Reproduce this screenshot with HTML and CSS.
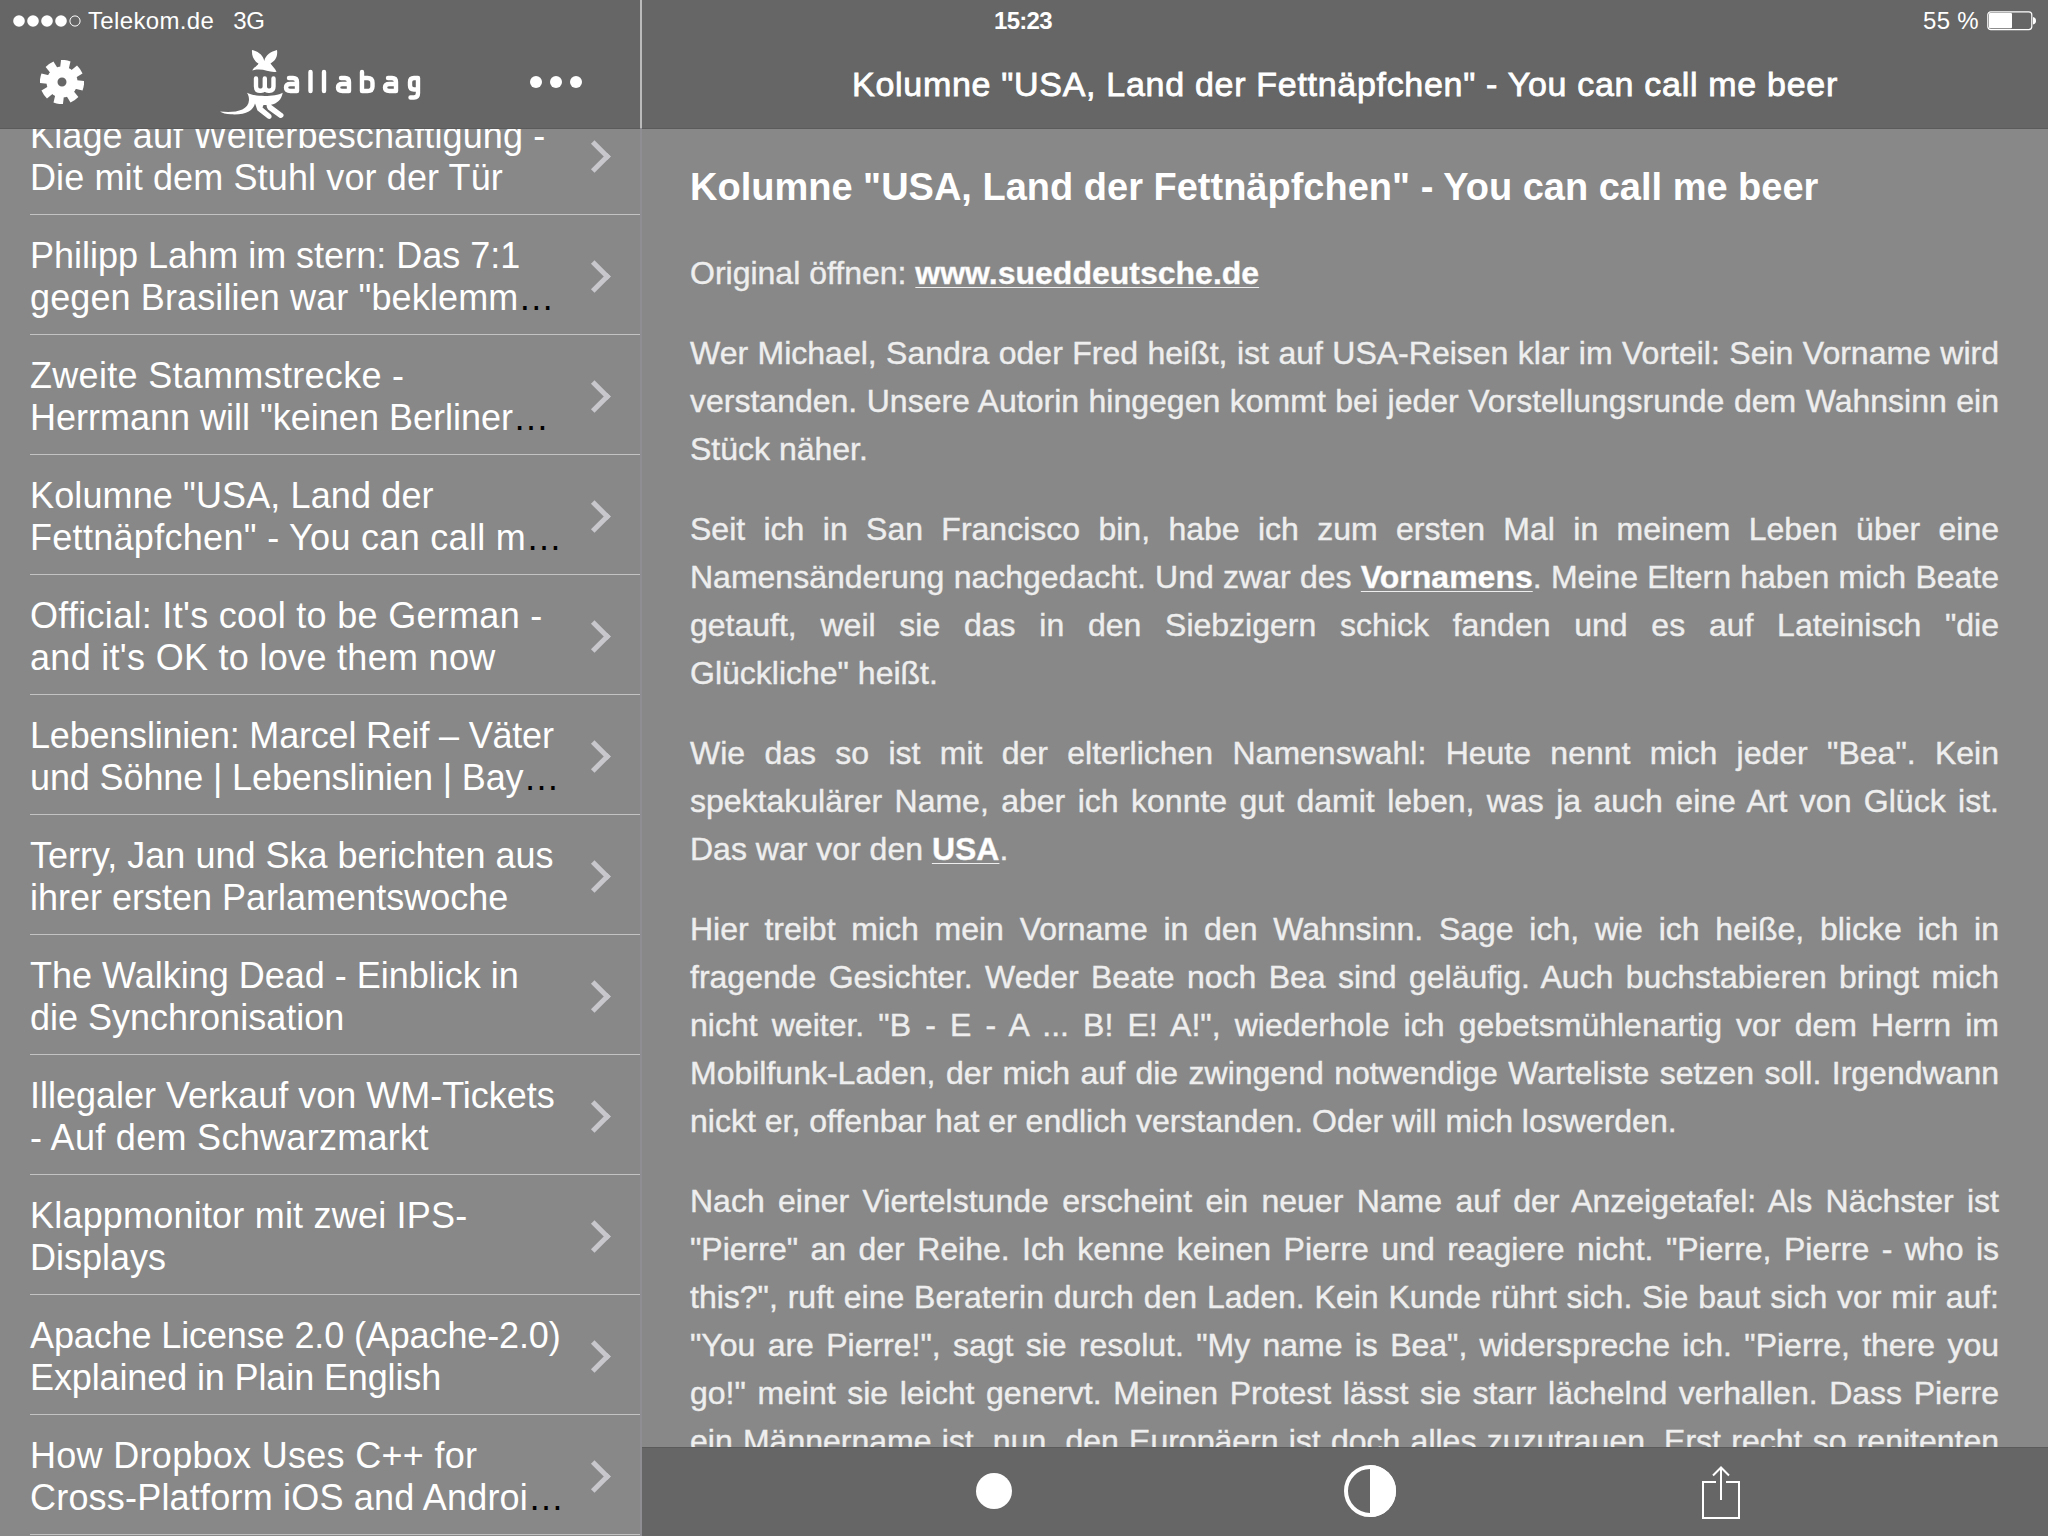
FILE: index.html
```html
<!DOCTYPE html>
<html lang="de">
<head>
<meta charset="utf-8">
<title>wallabag</title>
<link rel="stylesheet" href="styles.css">
</head>
<body>
<div class="app">
  <aside class="sidebar">
    <header class="bar">
      <div class="status status-left">
        <svg class="signal" width="68" height="12" viewBox="0 0 68 12" fill="#fff"><circle cx="6" cy="6" r="5.8"/><circle cx="20" cy="6" r="5.8"/><circle cx="34" cy="6" r="5.8"/><circle cx="48" cy="6" r="5.8"/><circle cx="62" cy="6" r="5.1" fill="none" stroke="#fff" stroke-width="1"/></svg>
        <span class="carrier">Telekom.de</span>
        <span class="network">3G</span>
      </div>
      <div class="tools">
        <svg class="gear" width="44" height="44" viewBox="-22 -22 44 44">
          <defs><path id="tooth" d="M-4.200 -12 L-4.800 -21.700 Q0 -22.600 4.800 -21.700 L4.200 -12 Z" fill="#fff"/></defs>
          <use href="#tooth" transform="rotate(10)"/><use href="#tooth" transform="rotate(55)"/><use href="#tooth" transform="rotate(100)"/><use href="#tooth" transform="rotate(145)"/><use href="#tooth" transform="rotate(190)"/><use href="#tooth" transform="rotate(235)"/><use href="#tooth" transform="rotate(280)"/><use href="#tooth" transform="rotate(325)"/>
          <circle r="10" fill="none" stroke="#fff" stroke-width="11"/>
        </svg>
        <svg class="logo" width="204" height="72" viewBox="0 0 204 72" fill="none" stroke="#fff" stroke-width="4.4" stroke-linecap="round" stroke-linejoin="round">
          <g fill="#fff" stroke="none">
            <path d="M32 0C38 1.500 43 5 44.300 11C45.500 5 51 1.500 57 0C58 7 55 11 50.500 13.500C52 16 55 18 56.500 21.700C49 23 43 17.500 32.300 20.500C34 17 37.500 16 38.500 13.500C34 11 31.500 6 32 0Z"/>
            <path d="M27 42.700C34 47 55 47 62.700 42.700C61.500 50 57 53.500 51 54.800L63 63.800C65 66 62 69 59.500 67.700L48 59.500C47 58 46.500 56.500 46.500 55H43.500L42.500 57.500L50.800 64.500C53 67 50.500 70 47.800 68.600L37.500 60.500C36.500 58 36 56 35 53.500C33 61 26 65 11 64.300C6 64 2 63.200 0 61.500C13 63 28.500 61.500 29 50C29 47 28.500 45 27 42.700Z"/>
          </g>
          <path d="M36 28.500V36.500Q36 40.800 40 40.800H41Q44.800 40.800 44.800 36.500V28.500V36.500Q44.800 40.800 48.500 40.800H49.500Q53.500 40.800 53.500 36.500V28.500" stroke-width="4.400"/>
          <path d="M69 28H73Q77 28 77 32V41H70.500Q66 41 66 37.500T70.500 34H77"/>
          <path d="M90.500 22V41M104 22V41"/>
          <path d="M121 28H125Q129 28 129 32V41H122.500Q118 41 118 37.500T122.500 34H129"/>
          <path d="M142 22V41H147.500Q152.500 41 152.500 36.500V33Q152.500 28 147.500 28H142"/>
          <path d="M168 28H172Q176 28 176 32V41H169.500Q165 41 165 37.500T169.500 34H176"/>
          <path d="M198 39.500H194Q190 39.500 190 35.500V32Q190 28 194 28H198V43Q198 47.500 194 47.500H190.500"/>
        </svg>
        <svg class="more" width="52" height="12" viewBox="0 0 52 12" fill="#fff"><circle cx="6" cy="6" r="6"/><circle cx="26" cy="6" r="6"/><circle cx="46" cy="6" r="6"/></svg>
      </div>
    </header>
    <ul class="list">
      <li><p><span class="loose-1">Klage auf Weiterbeschäftigung -</span><span class="loose-1">Die mit dem Stuhl vor der Tür</span></p></li>
      <li><p><span>Philipp Lahm im stern: Das 7:1</span><span class="loose-1">gegen Brasilien war "beklemm<i>…</i></span></p></li>
      <li><p><span class="loose-3">Zweite Stammstrecke -</span><span>Herrmann will "keinen Berliner<i>…</i></span></p></li>
      <li><p><span class="loose-1">Kolumne "USA, Land der</span><span class="loose-3">Fettnäpfchen" - You can call m<i>…</i></span></p></li>
      <li><p><span class="loose-3">Official: It's cool to be German -</span><span class="loose-3">and it's OK to love them now</span></p></li>
      <li><p><span class="tight-2">Lebenslinien: Marcel Reif – Väter</span><span class="tight-1">und Söhne | Lebenslinien | Bay<i>…</i></span></p></li>
      <li><p><span>Terry, Jan und Ska berichten aus</span><span>ihrer ersten Parlamentswoche</span></p></li>
      <li><p><span>The Walking Dead - Einblick in</span><span>die Synchronisation</span></p></li>
      <li><p><span>Illegaler Verkauf von WM-Tickets</span><span class="loose-3">- Auf dem Schwarzmarkt</span></p></li>
      <li><p><span class="loose-2">Klappmonitor mit zwei IPS-</span><span>Displays</span></p></li>
      <li><p><span class="tight-1">Apache License 2.0 (Apache-2.0)</span><span class="tight-1">Explained in Plain English</span></p></li>
      <li><p><span class="loose-3">How Dropbox Uses C++ for</span><span class="loose-2">Cross-Platform iOS and Androi<i>…</i></span></p></li>
    </ul>
  </aside>
  <div class="divider"></div>
  <main class="reader">
    <header class="bar">
      <div class="status status-right">
        <span class="clock">15:23</span>
        <span class="percent">55 %</span>
        <svg class="battery" width="50" height="20" viewBox="0 0 50 20"><rect x=".8" y=".8" width="44" height="17.800" rx="3" fill="none" stroke="#fff" stroke-width="1.200"/><rect x="2" y="2" width="23" height="15.300" rx="1" fill="#fff"/><path d="M46 6Q49 6.500 49 9.700T46 13.400Z" fill="#fff"/></svg>
      </div>
      <h2 class="navtitle">Kolumne "USA, Land der Fettnäpfchen" - You can call me beer</h2>
    </header>
    <article class="article">
      <h1>Kolumne "USA, Land der Fettnäpfchen" - You can call me beer</h1>
      <p>Original öffnen: <a>www.sueddeutsche.de</a></p>
      <p>Wer Michael, Sandra oder Fred heißt, ist auf USA-Reisen klar im Vorteil: Sein Vorname wird verstanden. Unsere Autorin hingegen kommt bei jeder Vorstellungsrunde dem Wahnsinn ein Stück näher.</p>
      <p>Seit ich in San Francisco bin, habe ich zum ersten Mal in meinem Leben über eine Namensänderung nachgedacht. Und zwar des <a>Vornamens</a>. Meine Eltern haben mich Beate getauft, weil sie das in den Siebzigern schick fanden und es auf Lateinisch "die Glückliche"&nbsp;heißt.</p>
      <p>Wie das so ist mit der elterlichen Namenswahl: Heute nennt mich jeder "Bea". Kein spektakulärer Name, aber ich konnte gut damit leben, was ja auch eine Art von Glück ist. Das war vor den <a>USA</a>.</p>
      <p>Hier treibt mich mein Vorname in den Wahnsinn. Sage ich, wie ich heiße, blicke ich in fragende Gesichter. Weder Beate noch Bea sind geläufig. Auch buchstabieren bringt mich nicht weiter. "B - E - A ... B! E! A!", wiederhole ich gebetsmühlenartig vor dem Herrn im Mobilfunk-Laden, der mich auf die zwingend notwendige Warteliste setzen soll. Irgendwann nickt er, offenbar hat er endlich verstanden. Oder will mich loswerden.</p>
      <p class="cut">Nach einer Viertelstunde erscheint ein neuer Name auf der Anzeigetafel: Als Nächster ist "Pierre" an der Reihe. Ich kenne keinen Pierre und reagiere nicht. "Pierre, Pierre - who is this?", ruft eine Beraterin durch den Laden. Kein Kunde rührt sich. Sie baut sich vor mir auf: "You are Pierre!", sagt sie resolut. "My name is Bea", widerspreche ich. "Pierre, there you go!" meint sie leicht genervt. Meinen Protest lässt sie starr lächelnd verhallen. Dass Pierre ein Männername ist, nun, den Europäern ist doch alles zuzutrauen. Erst recht so renitenten</p>
    </article>
    <footer class="toolbar">
      <svg class="dot" width="36" height="36" viewBox="0 0 36 36"><circle cx="18" cy="18" r="18" fill="#fff"/></svg>
      <svg class="contrast" width="52" height="52" viewBox="0 0 52 52"><circle cx="26" cy="26" r="24" fill="none" stroke="#fff" stroke-width="4"/><path d="M26 0A26 26 0 0 1 26 52Z" fill="#fff"/></svg>
      <svg class="share" width="38" height="53" viewBox="0 0 38 53" fill="none" stroke="#fff" stroke-width="2"><path d="M14 16H1V52H37V16H24"/><path d="M19 34V1.500M11 9.500L19 1.500L27 9.500"/></svg>
    </footer>
  </main>
</div>
</body>
</html>
```
FILE: styles.css
```css
* { box-sizing: border-box; }
body { margin: 0; background: #888; color: #fff; font-family: "Liberation Sans", Arial, sans-serif; }
h1, h2, p, ul { margin: 0; padding: 0; }
svg { display: block; flex: none; }
.app { display: flex; width: 2048px; height: 1536px; overflow: hidden; }
.sidebar { width: 640px; height: 1536px; display: flex; flex-direction: column; overflow: hidden; }
.bar { flex: none; height: 129px; background: #666; border-bottom: 1px solid #5b5b5b; display: flex; flex-direction: column; position: relative; z-index: 1; }
.status { display: flex; align-items: center; height: 40px; padding-top: 2px; font-size: 24px; line-height: 38px; white-space: nowrap; }
.status-left { padding-left: 13px; }
.carrier { margin-left: 7px; letter-spacing: .35px; }
.network { margin-left: 19px; letter-spacing: -.3px; }
.tools { display: flex; align-items: flex-start; height: 88px; padding-left: 40px; }
.gear { margin-top: 20px; }
.logo { margin: 10px 0 0 136px; }
.more { margin: 36px 0 0 106px; }
.list { list-style: none; margin-top: -34px; }
.list li { flex: none; height: 120px; margin-left: 30px; border-bottom: 1px solid #c3c3c3; padding-top: 20px; display: flex; }
.list p { font-size: 36px; line-height: 42px; white-space: nowrap; flex: 1; }
.list span { display: block; }
.list i { font-style: normal; color: #000; }
.list li::after { content: ""; width: 18px; height: 18px; border: solid #c7c7cc; border-width: 5px 5px 0 0; transform: rotate(45deg); margin: 30px 34px 0 0; }
.loose-1 { letter-spacing: .12px; }
.loose-2 { letter-spacing: .2px; }
.loose-3 { letter-spacing: .3px; }
.tight-1 { letter-spacing: -.12px; }
.tight-2 { letter-spacing: -.2px; }
.divider { width: 2px; flex: none; background: linear-gradient(#bbb 128px, #8e8e93 128px); }
.reader { flex: 1; min-width: 0; display: flex; flex-direction: column; }
.status-right { justify-content: flex-end; padding-right: 11px; }
.clock { margin-right: auto; margin-left: 352px; font-weight: bold; letter-spacing: -.7px; }
.percent { margin-right: 8px; letter-spacing: .3px; }
.navtitle { text-align: center; font-size: 34px; font-weight: normal; line-height: 40px; padding-top: 24px; letter-spacing: .7px; -webkit-text-stroke: .8px #fff; }
.article { flex: 1; min-height: 0; overflow: hidden; padding: 0 49px 0 48px; color: #eee; font-size: 32px; line-height: 48px; text-align: justify; }
.article h1 { font-size: 38px; line-height: 54px; color: #fff; padding-top: 31px; margin-bottom: 35px; white-space: nowrap; }
.article p { margin-bottom: 32px; -webkit-text-stroke: .4px #eee; }
.article a { font-weight: bold; color: #fff; text-decoration: underline; text-decoration-thickness: 1px; text-underline-offset: 3px; }
.article .cut { text-align-last: justify; }
.toolbar { flex: none; height: 89px; background: #666; border-top: 1px solid #5b5b5b; display: flex; align-items: center; padding: 0 0 2px 334px; }
.contrast { margin-left: 332px; }
.share { margin-left: 306px; position: relative; top: 1px; }
```
